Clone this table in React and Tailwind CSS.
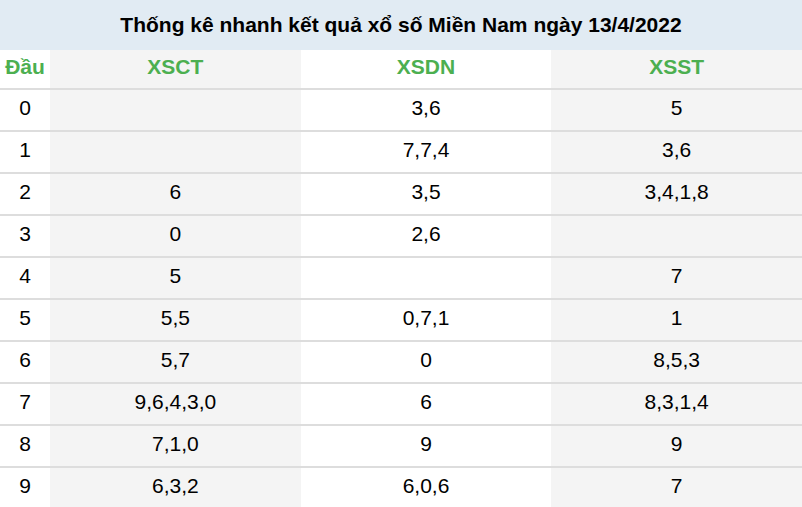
export default function App() {
  const rows = [
    ["0", "", "3,6", "5"],
    ["1", "", "7,7,4", "3,6"],
    ["2", "6", "3,5", "3,4,1,8"],
    ["3", "0", "2,6", ""],
    ["4", "5", "", "7"],
    ["5", "5,5", "0,7,1", "1"],
    ["6", "5,7", "0", "8,5,3"],
    ["7", "9,6,4,3,0", "6", "8,3,1,4"],
    ["8", "7,1,0", "9", "9"],
    ["9", "6,3,2", "6,0,6", "7"],
  ];
  const bg = ["bg-white", "bg-[#f4f4f4]", "bg-white", "bg-[#f4f4f4]"];
  return (
    <div
      className="w-[802px] h-[507px] overflow-hidden bg-white text-black"
      style={{ fontFamily: '"Liberation Sans", Arial, sans-serif' }}
    >
      <div className="h-[50px] bg-[#e1ebf3] flex items-center justify-center text-[21px] font-bold leading-6">
        Thống kê nhanh kết quả xổ số Miền Nam ngày 13/4/2022
      </div>
      <div className="grid grid-cols-[50px_1fr_1fr_1fr] h-[38px] text-[21px] font-bold text-[#4caf50] leading-6">
        {["Đầu", "XSCT", "XSDN", "XSST"].map((h, i) => (
          <div key={h} className={`${bg[i]} text-center pt-[5px] pb-[9px] whitespace-nowrap`}>
            {h}
          </div>
        ))}
      </div>
      {rows.map((r) => (
        <div
          key={r[0]}
          className="grid grid-cols-[50px_1fr_1fr_1fr] border-t-2 border-[#dddddd] h-[42px] text-[21px] leading-6"
        >
          {r.map((c, i) => (
            <div key={i} className={`${bg[i]} text-center pt-[6px] pb-[10px]`}>
              {c}
            </div>
          ))}
        </div>
      ))}
    </div>
  );
}
